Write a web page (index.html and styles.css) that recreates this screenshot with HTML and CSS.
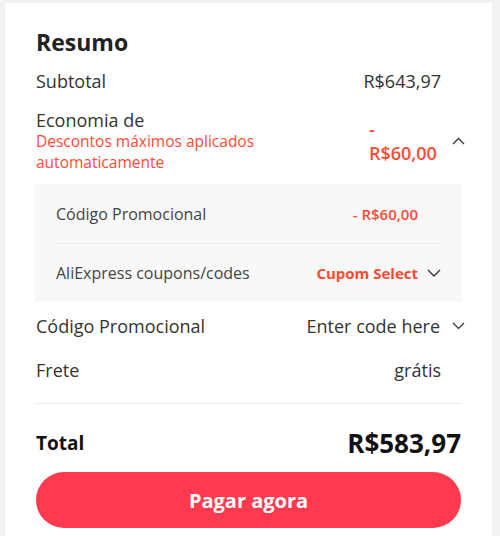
FILE: index.html
```html
<!DOCTYPE html>
<html lang="pt-BR">
<head>
    <meta charset="UTF-8">
    <meta name="viewport" content="width=device-width, initial-scale=1.0">
    <title>Resumo</title>
    <link rel="stylesheet" href="styles.css">
</head>
<body>
    <div class="card">
        <h2 class="title">Resumo</h2>

        <div class="row row-first">
            <span>Subtotal</span>
            <span class="value">R$643,97</span>
        </div>

        <div class="saving">
            <div class="saving-text">
                <div class="saving-label">Economia de</div>
                <div class="saving-note">Descontos máximos aplicados automaticamente</div>
            </div>
            <span class="saving-value">- R$60,00</span>
            <svg class="chev chev-up" width="13" height="8" viewBox="0 0 13 8"><polyline points="1,7 6.5,1.5 12,7" fill="none" stroke="#333" stroke-width="1.3"/></svg>
        </div>

        <div class="panel">
            <div class="panel-row">
                <span>Código Promocional</span>
                <span class="red semi">- R$60,00</span>
            </div>
            <div class="panel-row">
                <span>AliExpress coupons/codes</span>
                <span class="pick">
                    <span class="red bold">Cupom Select</span>
                    <svg class="chev" width="14" height="8" viewBox="0 0 14 8"><polyline points="1,1 7,7 13,1" fill="none" stroke="#333" stroke-width="1.4"/></svg>
                </span>
            </div>
        </div>

        <div class="row">
            <span>Código Promocional</span>
            <span class="pick">
                <span>Enter code here</span>
                <svg class="chev" width="13" height="8" viewBox="0 0 13 8"><polyline points="1,1 6.5,6.5 12,1" fill="none" stroke="#333" stroke-width="1.2"/></svg>
            </span>
        </div>
        <div class="row">
            <span>Frete</span>
            <span class="value">grátis</span>
        </div>

        <hr class="divider">

        <div class="total">
            <span class="total-label">Total</span>
            <span class="total-value">R$583,97</span>
        </div>

        <button type="button" class="pay">Pagar agora</button>
    </div>
</body>
</html>
```

FILE: styles.css
```css
body {
    margin: 0;
    padding: 3px 8px 0 5px;
    background-color: #f2f2f2;
    font-family: "Open Sans", "Noto Sans", sans-serif;
    color: #333;
}
.card {
    background-color: #fff;
    padding: 24px 31px 20px 31px;
    min-height: 533px;
    box-sizing: border-box;
}
.title {
    margin: 0 0 12px 0;
    font-size: 23px;
    line-height: 30px;
    font-weight: 700;
    color: #222;
}
.row {
    display: flex;
    justify-content: space-between;
    align-items: center;
    font-size: 18px;
    line-height: 24px;
    padding: 10px 20px 10px 0;
}
.row-first {
    padding-top: 0;
    padding-bottom: 0;
}
.value {
    color: #333;
}
.saving {
    display: flex;
    align-items: center;
    margin-top: 16px;
}
.saving-text {
    flex: 1;
}
.saving-label {
    font-size: 18px;
    line-height: 22px;
}
.saving-note {
    width: 240px;
    font-size: 15.5px;
    line-height: 21px;
    color: #ff4b33;
}
.saving-value {
    width: 68px;
    font-size: 18px;
    line-height: 24px;
    color: #ff4b33;
    font-weight: 600;
}
.chev {
    display: block;
}
.chev-up {
    margin-left: 15px;
    margin-right: -4px;
}
.panel {
    margin: 11px -1px 2px -1px;
    padding: 0 21px;
    background-color: #f8f8f8;
}
.panel-row {
    display: flex;
    justify-content: space-between;
    align-items: center;
    height: 59px;
    box-sizing: border-box;
    font-size: 16px;
    color: #444;
}
.panel-row + .panel-row {
    border-top: 1px solid #ececec;
}
.red {
    color: #ff4b33;
}
.semi {
    font-size: 15px;
    font-weight: 600;
    margin-right: 23px;
}
.bold {
    font-size: 15px;
    font-weight: 700;
}
.pick {
    display: flex;
    align-items: center;
    gap: 9px;
}
.row .pick {
    margin-right: -24px;
    gap: 12px;
}
.divider {
    border: none;
    border-top: 1px solid #ececec;
    margin: 11px 0 0 0;
}
.total {
    display: flex;
    justify-content: space-between;
    align-items: center;
    margin-top: 24px;
    height: 30px;
}
.total-label {
    font-size: 19px;
    font-weight: 700;
    color: #111;
}
.total-value {
    font-size: 26px;
    font-weight: 700;
    color: #111;
}
.pay {
    display: block;
    width: 100%;
    height: 56px;
    margin-top: 14px;
    border: none;
    border-radius: 28px;
    background-color: #ff3a4f;
    color: #fff;
    font-family: inherit;
    font-size: 20px;
    font-weight: 700;
    cursor: pointer;
}
```
